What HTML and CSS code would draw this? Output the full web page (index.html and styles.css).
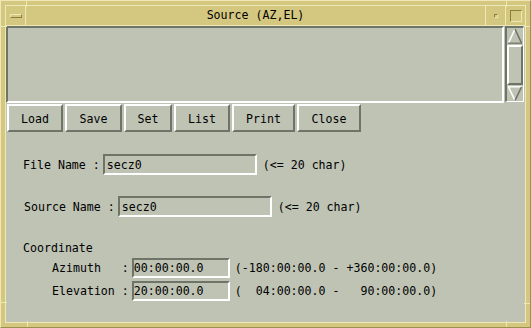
FILE: index.html
```html
<!DOCTYPE html>
<html lang="en">
<head>
  <meta charset="UTF-8" />
  <title>Source (AZ,EL)</title>
  <link rel="stylesheet" href="styles.css">
</head>
<body>

<div class="window">
  <!-- resize corner ticks on the frame -->
  <span class="tick tick-v" style="left:25px; top:0"></span>
  <span class="tick tick-v" style="left:505px; top:0"></span>
  <span class="tick tick-h" style="left:0; top:25px"></span>
  <span class="tick tick-h" style="right:0; top:25px"></span>
  <span class="tick tick-v" style="left:26px; bottom:0"></span>
  <span class="tick tick-v" style="left:505px; bottom:0"></span>
  <span class="tick tick-h" style="left:0; top:301px"></span>
  <span class="tick tick-h" style="right:0; top:302px"></span>

  <div class="frame">
    <div class="titlebar">
      <div class="tb-btn tb-menu"><span class="menu-bar"></span></div>
      <div class="title">Source (AZ,EL)</div>
      <div class="tb-btn tb-min"><span class="min-box"></span></div>
      <div class="tb-btn tb-max"><span class="max-box"></span></div>
    </div>

    <div class="content">
      <div class="scrolled">
        <div class="text-area"></div>
        <div class="scrollbar">
          <svg class="arrow" width="16" height="16" viewBox="0 0 16 16">
            <line x1="8" y1="1" x2="1.5" y2="15" stroke="#fff" stroke-width="1.6"/>
            <line x1="8" y1="1" x2="14.5" y2="15" stroke="#6f7469" stroke-width="1.6"/>
            <line x1="1" y1="15.2" x2="15" y2="15.2" stroke="#6f7469" stroke-width="1.2"/>
          </svg>
          <div class="slider"></div>
          <svg class="arrow" width="16" height="15" viewBox="0 0 16 15">
            <line x1="1" y1="0.8" x2="15" y2="0.8" stroke="#fff" stroke-width="1.4"/>
            <line x1="1.5" y1="1" x2="8" y2="14.5" stroke="#fff" stroke-width="1.6"/>
            <line x1="14.5" y1="1" x2="8" y2="14.5" stroke="#6f7469" stroke-width="1.6"/>
          </svg>
        </div>
      </div>

      <div class="buttons">
        <div class="btn w-load">Load</div>
        <div class="btn w-save">Save</div>
        <div class="btn w-set">Set</div>
        <div class="btn w-list">List</div>
        <div class="btn w-print">Print</div>
        <div class="btn w-close">Close</div>
      </div>

      <div class="form">
        <div class="row row-file">
          <span class="label">File Name :</span>
          <div class="field name-field">secz0</div>
          <span class="hint">(&lt;= 20 char)</span>
        </div>
        <div class="row row-source">
          <span class="label">Source Name :</span>
          <div class="field name-field">secz0</div>
          <span class="hint">(&lt;= 20 char)</span>
        </div>

        <div class="group-label">Coordinate</div>
        <div class="row coord-row">
          <span class="label">Azimuth   :</span>
          <div class="field coord-field">00:00:00.0</div>
          <span class="range">(-180:00:00.0 - +360:00:00.0)</span>
        </div>
        <div class="row coord-row coord-second">
          <span class="label">Elevation :</span>
          <div class="field coord-field">20:00:00.0</div>
          <span class="range">(  04:00:00.0 -   90:00:00.0)</span>
        </div>
      </div>
    </div>
  </div>
</div>

</body>
</html>
```

FILE: styles.css
```css
html, body {
  margin: 0;
  padding: 0;
  background: #d4c780;
}

body {
  font-family: 'DejaVu Sans Mono', 'Liberation Mono', monospace;
  font-size: 11.6px;
  line-height: 14px;
  color: #000;
}

.window {
  position: relative;
  width: 531px;
  height: 328px;
  box-sizing: border-box;
  background: #d4c780;
  border-top: 1px solid #efe7b6;
  border-left: 1px solid #efe7b6;
  border-right: 1px solid #9c8e4c;
  border-bottom: 1px solid #9c8e4c;
  padding: 4px;
}

/* corner ticks of the resize border */
.tick {
  position: absolute;
  background: #efe7b6;
}
.tick-v { width: 1px; height: 6px; }
.tick-h { width: 6px; height: 1px; }

.frame {
  height: 100%;
  box-sizing: border-box;
  border: 1px solid #efe7b6;
  display: flex;
  flex-direction: column;
}

/* title bar */
.titlebar {
  display: flex;
  height: 20px;
  box-sizing: border-box;
  border-bottom: 1px solid #efe7b6;
  background: #d4c780;
}

.tb-btn {
  width: 20px;
  display: flex;
  align-items: center;
  justify-content: center;
  box-sizing: border-box;
}
.tb-menu { border-right: 1px solid #efe7b6; }
.tb-min, .tb-max { border-left: 1px solid #efe7b6; }

.menu-bar {
  width: 12px;
  height: 4px;
  box-sizing: border-box;
  border-top: 1px solid #efe7b6;
  border-left: 1px solid #efe7b6;
  border-bottom: 1px solid #8a7d40;
  border-right: 1px solid #8a7d40;
}

.min-box {
  width: 4px;
  height: 4px;
  box-sizing: border-box;
  border-top: 1px solid #8a7d40;
  border-left: 1px solid #8a7d40;
  border-bottom: 1px solid #efe7b6;
  border-right: 1px solid #efe7b6;
}

.max-box {
  width: 12px;
  height: 12px;
  box-sizing: border-box;
  border-top: 1px solid #8a7d40;
  border-left: 1px solid #8a7d40;
  border-bottom: 1px solid #efe7b6;
  border-right: 1px solid #efe7b6;
}

.title {
  flex: 1;
  text-align: center;
  line-height: 19px;
}

/* main area */
.content {
  flex: 1;
  background: #bec3b4;
  display: flex;
  flex-direction: column;
}

.scrolled {
  display: flex;
  height: 77px;
}

.text-area {
  width: 498px;
  box-sizing: border-box;
  border-top: 2px solid #6f7469;
  border-left: 2px solid #6f7469;
  border-bottom: 2px solid #fff;
  border-right: 2px solid #fff;
  margin-right: 1px;
}

.scrollbar {
  width: 19px;
  height: 76px;
  box-sizing: border-box;
  border-top: 2px solid #6f7469;
  border-left: 2px solid #6f7469;
  border-bottom: 1px solid #fff;
  border-right: 1px solid #fff;
  display: flex;
  flex-direction: column;
}

.arrow { display: block; }

.slider {
  height: 40px;
  margin: 1px 0;
  box-sizing: border-box;
  border-top: 2px solid #fff;
  border-left: 2px solid #fff;
  border-bottom: 2px solid #6f7469;
  border-right: 2px solid #6f7469;
}

/* push buttons */
.buttons {
  display: flex;
  gap: 2px;
  margin: 1px 0 0 1px;
}

.btn {
  height: 28px;
  box-sizing: border-box;
  border-top: 2px solid #fff;
  border-left: 2px solid #fff;
  border-bottom: 2px solid #6f7469;
  border-right: 2px solid #6f7469;
  padding-top: 2px;
  display: flex;
  align-items: center;
  justify-content: center;
}
.w-load { width: 56px; }
.w-save { width: 57px; }
.w-set { width: 48px; }
.w-list { width: 56px; }
.w-print { width: 63px; }
.w-close { width: 64px; }

/* form */
.form {
  padding-left: 17px;
}

.row {
  display: flex;
  align-items: center;
  white-space: pre;
}

.row-file { margin-top: 22px; }
.row-source { margin-top: 21px; padding-left: 1px; }

.label { margin-right: 3px; }

.field {
  box-sizing: border-box;
  border-top: 2px solid #6f7469;
  border-left: 2px solid #6f7469;
  border-bottom: 2px solid #fff;
  border-right: 2px solid #fff;
  padding-left: 2px;
  display: flex;
  align-items: center;
}

.name-field {
  width: 154px;
  height: 21px;
  margin-right: 6px;
}

.group-label {
  margin-top: 24px;
}

.coord-row {
  padding-left: 29px;
  margin-top: 3px;
}

.coord-field {
  width: 98px;
  height: 20px;
  margin-right: 5px;
  padding-left: 0;
}
```
